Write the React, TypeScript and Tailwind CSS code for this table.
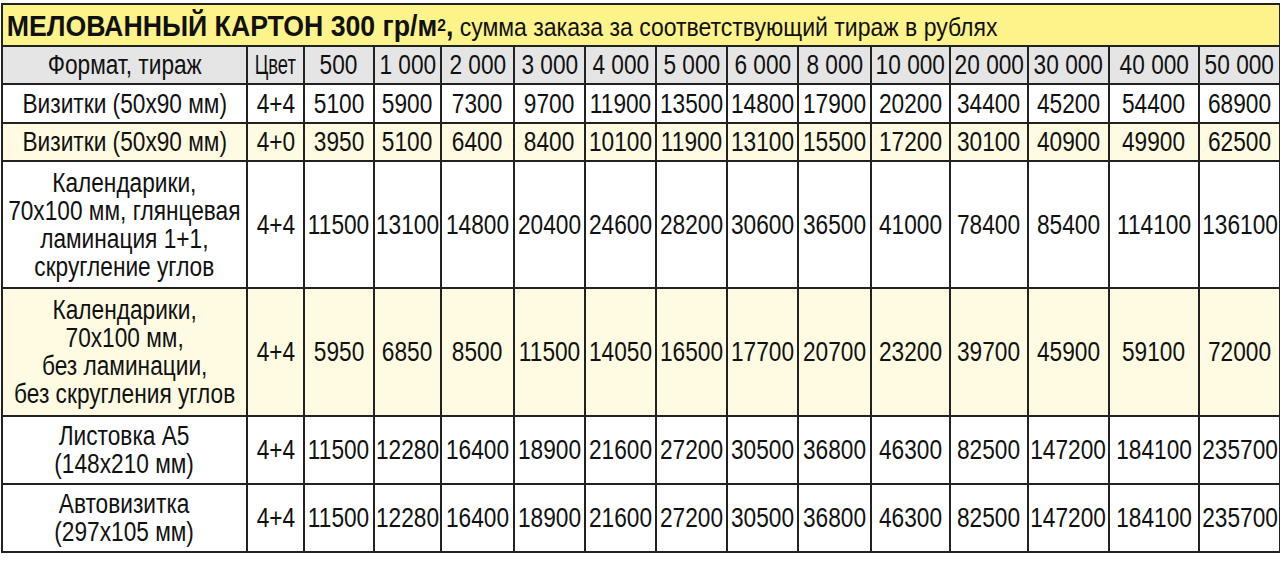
const cols = [245, 57, 70, 67, 73, 71, 71, 71, 71, 73, 79, 78, 81, 90, 81];

const header = ['500', '1 000', '2 000', '3 000', '4 000', '5 000', '6 000', '8 000', '10 000', '20 000', '30 000', '40 000', '50 000'];

type Row = { name: string[]; color: string; prices: string[]; tint: boolean; h: string };

const rows: Row[] = [
  {
    name: ['Визитки (50x90 мм)'],
    color: '4+4',
    prices: ['5100', '5900', '7300', '9700', '11900', '13500', '14800', '17900', '20200', '34400', '45200', '54400', '68900'],
    tint: false,
    h: 'h-[39px]',
  },
  {
    name: ['Визитки (50x90 мм)'],
    color: '4+0',
    prices: ['3950', '5100', '6400', '8400', '10100', '11900', '13100', '15500', '17200', '30100', '40900', '49900', '62500'],
    tint: true,
    h: 'h-[38px]',
  },
  {
    name: ['Календарики,', '70x100 мм, глянцевая', 'ламинация 1+1,', 'скругление углов'],
    color: '4+4',
    prices: ['11500', '13100', '14800', '20400', '24600', '28200', '30600', '36500', '41000', '78400', '85400', '114100', '136100'],
    tint: false,
    h: 'h-[127px]',
  },
  {
    name: ['Календарики,', '70x100 мм,', 'без ламинации,', 'без скругления углов'],
    color: '4+4',
    prices: ['5950', '6850', '8500', '11500', '14050', '16500', '17700', '20700', '23200', '39700', '45900', '59100', '72000'],
    tint: true,
    h: 'h-[128px]',
  },
  {
    name: ['Листовка А5', '(148x210 мм)'],
    color: '4+4',
    prices: ['11500', '12280', '16400', '18900', '21600', '27200', '30500', '36800', '46300', '82500', '147200', '184100', '235700'],
    tint: false,
    h: 'h-[68px]',
  },
  {
    name: ['Автовизитка', '(297x105 мм)'],
    color: '4+4',
    prices: ['11500', '12280', '16400', '18900', '21600', '27200', '30500', '36800', '46300', '82500', '147200', '184100', '235700'],
    tint: false,
    h: 'h-[68px]',
  },
];

// narrow text: the source uses a condensed face, so squeeze Liberation Sans
function Narrow({ children, tight }: { children: React.ReactNode; tight?: boolean }) {
  return (
    <div className="flex justify-center">
      <div className={`whitespace-nowrap text-center ${tight ? 'scale-x-[0.68]' : 'scale-x-[0.84]'}`}>{children}</div>
    </div>
  );
}

const cell = 'border-2 border-[#222] p-0';

export default function App() {
  return (
    <div className="w-[1280px] h-[568px] bg-white pt-[3px] pl-px text-[#111] font-['Liberation_Sans',Arial,sans-serif]">
      <table className="table-fixed border-collapse w-[1278px]">
        <colgroup>
          {cols.map((w, i) => (
            <col key={i} style={{ width: w }} />
          ))}
        </colgroup>
        <tbody>
          <tr className="h-[42px] bg-[#fdf38b]">
            <td colSpan={15} className={`${cell} text-left overflow-hidden`}>
              <div className="whitespace-nowrap origin-left scale-x-[0.92] pl-[4px] pt-[2px] leading-none">
                <span className="text-[29px] font-bold">
                  МЕЛОВАННЫЙ КАРТОН 300 гр/м<sup className="text-[17px] relative -top-[5px]">2</sup>,
                </span>
                <span className="text-[25px]"> сумма заказа за соответствующий тираж в рублях</span>
              </div>
            </td>
          </tr>
          <tr className="h-[38px] bg-[#e5e5e5] text-[27px] leading-none">
            <td className={cell}>
              <Narrow>Формат, тираж</Narrow>
            </td>
            <td className={cell}>
              <Narrow tight>Цвет</Narrow>
            </td>
            {header.map((h) => (
              <td key={h} className={cell}>
                <Narrow>{h}</Narrow>
              </td>
            ))}
          </tr>
          {rows.map((r, i) => (
            <tr key={i} className={`${r.h} ${r.tint ? 'bg-[#fefbe2]' : 'bg-white'} text-[27px] leading-[28px]`}>
              <td className={cell}>
                <Narrow>
                  {r.name.map((n, j) => (
                    <div key={j}>{n}</div>
                  ))}
                </Narrow>
              </td>
              <td className={cell}>
                <Narrow>{r.color}</Narrow>
              </td>
              {r.prices.map((p, j) => (
                <td key={j} className={cell}>
                  <Narrow>{p}</Narrow>
                </td>
              ))}
            </tr>
          ))}
        </tbody>
      </table>
    </div>
  );
}
